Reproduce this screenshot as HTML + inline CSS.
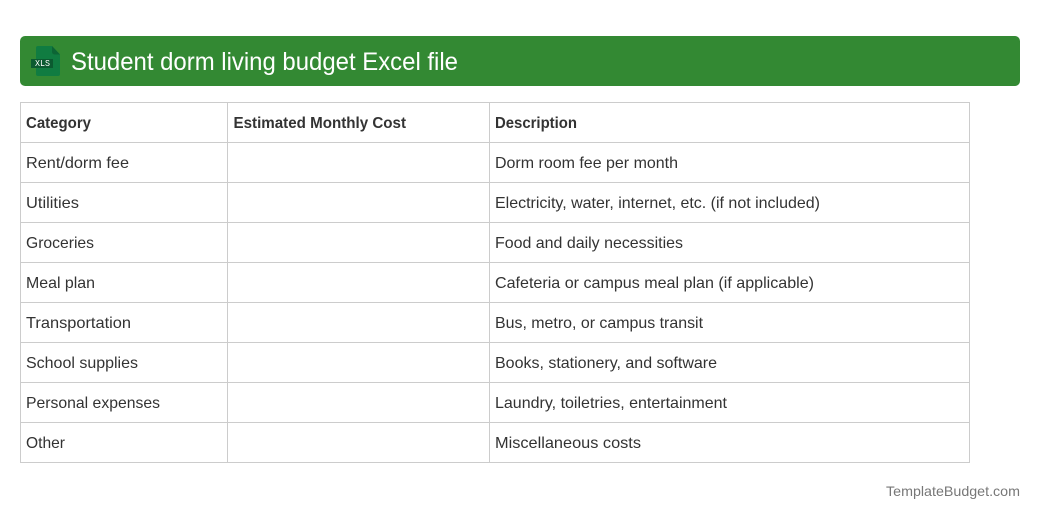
<!DOCTYPE html>
<html lang="en">
<head>
<meta charset="utf-8">
<title>Student dorm living budget Excel file</title>
<style>
html,body{margin:0;padding:0;background:#fff;width:1040px;height:520px;overflow:hidden}
svg{display:block}
text{font-family:"Liberation Sans",Arial,sans-serif;font-size:16px;fill:#333}
.b{font-weight:bold;fill:#333}
</style>
</head>
<body>
<svg width="1040" height="520" viewBox="0 0 1040 520" xmlns="http://www.w3.org/2000/svg">
<rect x="20" y="36" width="1000" height="50" rx="5" fill="#338933"/>
<path d="M38 46H52L60 54.500V74a2 2 0 0 1-2 2H38a2 2 0 0 1-2-2V48a2 2 0 0 1 2-2z" fill="#107c41"/>
<path d="M52 46L60 54.500H54.500a2.500 2.500 0 0 1-2.500-2.500z" fill="#0c6535"/>
<rect x="31" y="59" width="22" height="9" fill="#0b5a30"/>
<text x="35" y="66" textLength="15" lengthAdjust="spacingAndGlyphs" style="font-family:'Liberation Mono',monospace;font-size:9px;fill:#fff">XLS</text>
<text x="71" y="70" textLength="387" lengthAdjust="spacingAndGlyphs" style="font-size:25px;fill:#fff">Student dorm living budget Excel file</text>

<g fill="#ccc">
<rect x="20" y="102" width="950" height="1"/>
<rect x="20" y="142" width="950" height="1"/>
<rect x="20" y="182" width="950" height="1"/>
<rect x="20" y="222" width="950" height="1"/>
<rect x="20" y="262" width="950" height="1"/>
<rect x="20" y="302" width="950" height="1"/>
<rect x="20" y="342" width="950" height="1"/>
<rect x="20" y="382" width="950" height="1"/>
<rect x="20" y="422" width="950" height="1"/>
<rect x="20" y="462" width="950" height="1"/>
<rect x="20" y="102" width="1" height="361"/>
<rect x="227" y="102" width="1" height="361"/>
<rect x="489" y="102" width="1" height="361"/>
<rect x="969" y="102" width="1" height="361"/>
</g>

<text class="b" x="26" y="128" textLength="65" lengthAdjust="spacingAndGlyphs">Category</text>
<text class="b" x="233.500" y="128" textLength="172.500" lengthAdjust="spacingAndGlyphs">Estimated Monthly Cost</text>
<text class="b" x="495" y="128" textLength="82" lengthAdjust="spacingAndGlyphs">Description</text>

<text x="26" y="168" textLength="103" lengthAdjust="spacingAndGlyphs">Rent/dorm fee</text>
<text x="495" y="168" textLength="183" lengthAdjust="spacingAndGlyphs">Dorm room fee per month</text>
<text x="26" y="208" textLength="53" lengthAdjust="spacingAndGlyphs">Utilities</text>
<text x="495" y="208" textLength="325" lengthAdjust="spacingAndGlyphs">Electricity, water, internet, etc. (if not included)</text>
<text x="26" y="248" textLength="68" lengthAdjust="spacingAndGlyphs">Groceries</text>
<text x="495" y="248" textLength="188" lengthAdjust="spacingAndGlyphs">Food and daily necessities</text>
<text x="26" y="288" textLength="69" lengthAdjust="spacingAndGlyphs">Meal plan</text>
<text x="495" y="288" textLength="319" lengthAdjust="spacingAndGlyphs">Cafeteria or campus meal plan (if applicable)</text>
<text x="26" y="328" textLength="105" lengthAdjust="spacingAndGlyphs">Transportation</text>
<text x="495" y="328" textLength="208" lengthAdjust="spacingAndGlyphs">Bus, metro, or campus transit</text>
<text x="26" y="368" textLength="112" lengthAdjust="spacingAndGlyphs">School supplies</text>
<text x="495" y="368" textLength="222" lengthAdjust="spacingAndGlyphs">Books, stationery, and software</text>
<text x="26" y="408" textLength="134" lengthAdjust="spacingAndGlyphs">Personal expenses</text>
<text x="495" y="408" textLength="232" lengthAdjust="spacingAndGlyphs">Laundry, toiletries, entertainment</text>
<text x="26" y="448" textLength="39" lengthAdjust="spacingAndGlyphs">Other</text>
<text x="495" y="448" textLength="146" lengthAdjust="spacingAndGlyphs">Miscellaneous costs</text>

<text x="886" y="496" textLength="134" lengthAdjust="spacingAndGlyphs" style="font-size:14px;fill:#777">TemplateBudget.com</text>
</svg>
</body>
</html>
